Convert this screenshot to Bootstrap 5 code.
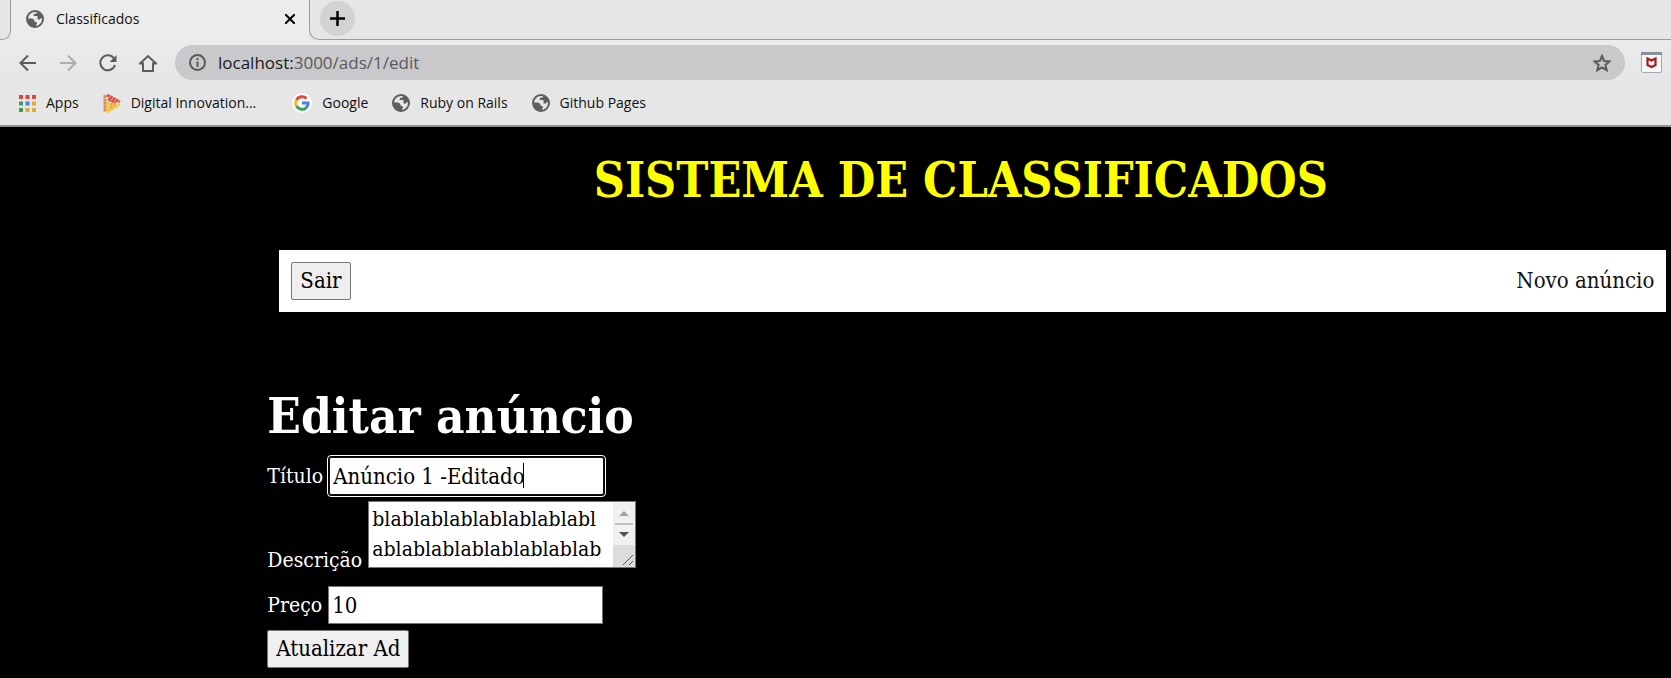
<!DOCTYPE html>
<html lang="pt-BR">
<head>
<meta charset="utf-8">
<meta name="viewport" content="width=device-width, initial-scale=1">
<title>Classificados</title>
<link href="https://cdn.jsdelivr.net/npm/bootstrap@5.3.0/dist/css/bootstrap.min.css" rel="stylesheet">
<style>
  body { background: #000; color: #fff; font-family: "DejaVu Serif Condensed", "DejaVu Serif", serif; font-size: 22px; line-height: 30px; }
  button { font: inherit; }
  svg { display: block; flex: none; }

  /* browser window */
  .browser { background: #e6e6e6; color: #111; font-family: "Open Sans", "Noto Sans", sans-serif; font-size: 14px; line-height: 20px; border-bottom: 2px solid #919191; }
  .browser a { color: inherit; text-decoration: none; }
  .browser button { background: none; border: 0; padding: 0; color: #5a5c5f; }
  .tab-strip { height: 40px; }
  .strip-edge { border-bottom: 1px solid #9a9c9c; }
  .edge-left { width: 11px; border-right: 1px solid #9a9c9c; border-bottom: 1px solid #9a9c9c; border-bottom-right-radius: 9px; }
  .page-tab { width: 298px; background: #ececec; padding: 0 14px 2px 15px; }
  .edge-right { border-left: 1px solid #9a9c9c; border-bottom-left-radius: 10px; padding: 0 0 2px 10px; }
  .browser .new-tab { width: 35px; height: 35px; border-radius: 50%; background: #d3d3d3; color: #000; }
  .browser .close-tab { color: #000; }
  .toolbar { background: linear-gradient(#ebebeb, #e6e6e6); height: 45px; padding: 0 9px 0 19px; }
  .nav-icons { gap: 22px; width: 156px; }
  .address { background: #c9c9cb; height: 35px; border-radius: 18px; padding: 0 14px; }
  .address span { font-size: 17px; color: #58595c; }
  .address b { font-weight: 400; color: #1b1b1b; }
  .bookmarks { height: 40px; padding: 0 19px 4px; gap: 24px; }
  .bookmarks a { gap: 10px; }

  /* application */
  .site { padding: 23px 1% 8px 16%; }
  .site-name { font-size: 48px; line-height: 60px; font-weight: 700; color: #ff0; }
  .site-menu { background: #fff; padding: 12px; margin: 40px -12px 0 12px; }
  .site-menu a { color: #111; text-decoration: none; }
  .push { background: #efefef; color: #000; border: 1px solid #767676; border-radius: 2px; padding: 3px 8px; }
  .page-name { font-size: 49px; line-height: 60px; font-weight: 700; margin: 74px 0 11px; }
  .ad-form { gap: 6px; }
  .ad-form label { font-size: 21px; line-height: 16px; }
  .ad-row { gap: 6px; }
  .ad-form .field { width: 275px; height: 38px; border: 1px solid #767676; border-radius: 0; padding: 1px 3px; color: #000; background: #fff; font: inherit; line-height: 34px; }
  .ad-form .field-active { outline: 1px solid #fff; outline-offset: 1px; border: 1px solid #101010; border-radius: 2px; }
  .ad-form textarea.field { width: 268px; height: 67px; font-size: 21px; line-height: 30px; padding: 2px 31px 2px 3px; resize: none; overflow: hidden; display: block; word-break: break-all; }
  .caret { top: 6px; left: 194px; width: 1px; height: 25px; background: #000; }
  .scroller { top: 1px; right: 1px; }
</style>
</head>
<body>
<header class="browser">
  <div class="tab-strip d-flex">
    <div class="edge-left"></div>
    <div class="page-tab d-flex align-items-center">
      <svg width="18" height="18" viewBox="0 0 18 18"><circle cx="9" cy="9" r="8" fill="#ececec" stroke="#5c5e61" stroke-width="2"/><path d="M1 8.500 5 8.500Q8.500 8.500 8.500 11.500 11 11.500 11 13.500 10 14 10 17 5 18 2 14zM11 1V3.500H9.500Q7.500 3.500 7.500 6H11.500V9.500H14Q14 7.500 17 8 16 2 11 1z" fill="#5c5e61"/></svg>
      <span class="ms-2 ps-1">Classificados</span>
      <button class="close-tab ms-auto" aria-label="Fechar guia"><svg width="10" height="10" viewBox="0 0 10 10" stroke="currentColor" stroke-width="2"><path d="M0 0 10 10M10 0 0 10"/></svg></button>
    </div>
    <div class="edge-right strip-edge flex-grow-1 d-flex align-items-center">
      <button class="new-tab d-flex align-items-center justify-content-center" aria-label="Nova guia"><svg width="15" height="15" viewBox="0 0 15 15" stroke="currentColor" stroke-width="2.500"><path d="M7.500 0V15M0 7.500H15"/></svg></button>
    </div>
  </div>

  <div class="toolbar d-flex align-items-center">
    <div class="nav-icons d-flex">
      <button aria-label="Voltar"><svg width="18" height="18" viewBox="0 0 18 18" fill="none" stroke="currentColor" stroke-width="2"><path d="M17 9H2M9 1.500 1.500 9 9 16.500"/></svg></button>
      <button aria-label="Avançar"><svg width="18" height="18" viewBox="0 0 18 18" fill="none" stroke="#adadad" stroke-width="2"><path d="M1 9H16M9 1.500 16.500 9 9 16.500"/></svg></button>
      <button aria-label="Recarregar"><svg width="18" height="18" viewBox="0 0 18 18" fill="none" stroke="currentColor" stroke-width="2"><path d="M15 4.500A7.500 7.500 0 1 0 16 11"/><path d="M17.500 1v7h-7z" fill="currentColor" stroke="none"/></svg></button>
      <button aria-label="Página inicial"><svg width="18" height="18" viewBox="0 0 18 18" fill="none" stroke="currentColor" stroke-width="2"><path d="M1 9.500 9 2l8 7.500H14V17H4V9.500z"/></svg></button>
    </div>
    <div class="address flex-grow-1 d-flex align-items-center justify-content-between">
      <div class="d-flex align-items-center">
        <svg width="17" height="17" viewBox="0 0 17 17"><circle cx="8.500" cy="8.500" r="7.500" fill="none" stroke="#58595c" stroke-width="2"/><path d="M7.500 7.500h2V13h-2zM7.500 4h2v2h-2z" fill="#58595c"/></svg>
        <span class="ms-2 ps-1"><b>localhost:</b>3000/ads/1/edit</span>
      </div>
      <button aria-label="Favoritar"><svg width="18" height="18" viewBox="0 0 18 18" fill="none" stroke="currentColor" stroke-width="2"><path d="m9 2 2.100 5 5.400.400-4.100 3.500 1.300 5.300L9 13.400l-4.700 2.800 1.300-5.300L1.500 7.400 6.900 7z"/></svg></button>
    </div>
    <button class="ms-3" aria-label="McAfee"><svg width="21" height="21" viewBox="0 0 21 21"><rect x=".5" y=".5" width="20" height="20" rx="1.500" fill="#f8f8f8" stroke="#a2abb0"/><path d="M0 0h21v3H0z" fill="#82939b"/><path d="M6.500 6.500 10.500 8.500 14.500 6.500V13L10.500 15 6.500 13z" fill="none" stroke="#a51c20" stroke-width="2.200"/></svg></button>
  </div>

  <nav class="bookmarks d-flex align-items-center">
    <a href="#" class="d-flex align-items-center"><svg width="17" height="17" viewBox="0 0 17 17"><path d="M0 0h4v4H0zM6.500 0h4v4h-4zM13 0h4v4h-4z" fill="#d9493d"/><path d="M0 6.500h4v4H0zM0 13h4v4H0z" fill="#3e9b59"/><path d="M6.500 6.500h4v4h-4z" fill="#4285e8"/><path d="M13 6.500h4v4h-4zM6.500 13h4v4h-4zM13 13h4v4h-4z" fill="#e4a935"/></svg>Apps</a>
    <a href="#" class="d-flex align-items-center"><svg width="18" height="19" viewBox="0 0 18 19" fill="none" stroke-width="3" stroke-dasharray="3 .4"><path d="M2 1v17" stroke="#e78650"/><path d="M4 1 17 8M5 5l8 4" stroke="#dc5446"/><path d="M5 8v9l12-7" stroke="#eecb45"/><path d="M8 9v4l5-3" stroke="#efad42"/></svg>Digital Innovation...</a>
    <a href="#" class="d-flex align-items-center ms-2 ps-1"><svg width="20" height="20" viewBox="0 0 20 20"><circle cx="10" cy="10" r="10" fill="#fafafa"/><g fill="none" stroke-width="3"><path d="M14.500 5.500A6.300 6.300 0 0 0 4.500 7" stroke="#e3473b"/><path d="M4.500 7a6.300 6.300 0 0 0 0 6" stroke="#f3b92d"/><path d="M4.500 13a6.300 6.300 0 0 0 9.700 1.800" stroke="#37a257"/><path d="M14.200 14.800A6.300 6.300 0 0 0 16 10H10" stroke="#4583e6"/></g></svg>Google</a>
    <a href="#" class="d-flex align-items-center"><svg width="18" height="18" viewBox="0 0 18 18"><circle cx="9" cy="9" r="8" fill="#e6e6e6" stroke="#5c5e61" stroke-width="2"/><path d="M1 8.500 5 8.500Q8.500 8.500 8.500 11.500 11 11.500 11 13.500 10 14 10 17 5 18 2 14zM11 1V3.500H9.500Q7.500 3.500 7.500 6H11.500V9.500H14Q14 7.500 17 8 16 2 11 1z" fill="#5c5e61"/></svg>Ruby on Rails</a>
    <a href="#" class="d-flex align-items-center"><svg width="18" height="18" viewBox="0 0 18 18"><circle cx="9" cy="9" r="8" fill="#e6e6e6" stroke="#5c5e61" stroke-width="2"/><path d="M1 8.500 5 8.500Q8.500 8.500 8.500 11.500 11 11.500 11 13.500 10 14 10 17 5 18 2 14zM11 1V3.500H9.500Q7.500 3.500 7.500 6H11.500V9.500H14Q14 7.500 17 8 16 2 11 1z" fill="#5c5e61"/></svg>Github Pages</a>
  </nav>
</header>

<div class="site">
  <h1 class="site-name text-center text-uppercase text-nowrap mb-0">Sistema de Classificados</h1>
  <nav class="site-menu d-flex align-items-center justify-content-between">
    <button class="push">Sair</button>
    <a href="#">Novo anúncio</a>
  </nav>

  <main>
    <h2 class="page-name">Editar anúncio</h2>
    <form class="ad-form d-flex flex-column align-items-start">
      <div class="ad-row d-flex align-items-center">
        <label for="titulo">Título</label>
        <div class="position-relative d-flex">
          <input class="field field-active" id="titulo" type="text" value="Anúncio 1 -Editado">
          <span class="caret position-absolute"></span>
        </div>
      </div>
      <div class="ad-row d-flex align-items-end mb-2 pb-1">
        <label for="descricao">Descrição</label>
        <div class="position-relative">
          <textarea class="field" id="descricao">blablablablablablablablablablablablablablablab</textarea>
          <svg class="scroller position-absolute" width="22" height="65" viewBox="0 0 22 65"><path d="M0 0h22v65H0z" fill="#f1f1f1"/><path d="M0 43h22v22H0z" fill="#dcdcdc"/><path d="M2 22h18" stroke="#c1c1c1" stroke-width="2"/><path d="m6 14 5-5 5 5z" fill="#a3a3a3"/><path d="m6 30 5 5 5-5z" fill="#505050"/><path d="M10 63 20 53M16 63l4-4" stroke="#555"/></svg>
        </div>
      </div>
      <div class="ad-row d-flex align-items-center">
        <label for="preco">Preço</label>
        <input class="field" id="preco" type="text" value="10">
      </div>
      <button class="push" type="button">Atualizar Ad</button>
    </form>
  </main>
</div>
<script src="https://cdn.jsdelivr.net/npm/bootstrap@5.3.0/dist/js/bootstrap.bundle.min.js"></script>
</body>
</html>
